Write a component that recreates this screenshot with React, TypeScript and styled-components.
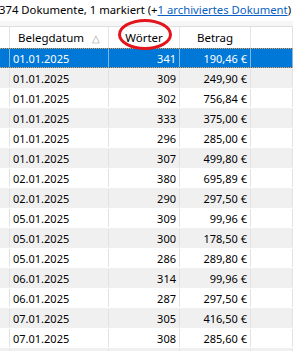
import React from 'react'
import styled, { createGlobalStyle } from 'styled-components'

const GlobalStyle = createGlobalStyle`
  html, body {
    margin: 0;
    padding: 0;
    background: #ffffff;
    overflow: hidden;
  }
  body {
    font-family: 'Noto Sans', 'Open Sans', sans-serif;
    font-size: 11px;
    color: #000000;
  }
`

const rows: [string, number, string][] = [
  ['01.01.2025', 341, '190,46 €'],
  ['01.01.2025', 309, '249,90 €'],
  ['01.01.2025', 302, '756,84 €'],
  ['01.01.2025', 333, '375,00 €'],
  ['01.01.2025', 296, '285,00 €'],
  ['01.01.2025', 307, '499,80 €'],
  ['02.01.2025', 380, '695,89 €'],
  ['02.01.2025', 290, '297,50 €'],
  ['05.01.2025', 309, '99,96 €'],
  ['05.01.2025', 300, '178,50 €'],
  ['05.01.2025', 286, '289,80 €'],
  ['06.01.2025', 314, '99,96 €'],
  ['06.01.2025', 287, '297,50 €'],
  ['07.01.2025', 305, '416,50 €'],
  ['07.01.2025', 308, '285,60 €'],
  ['07.01.2025', 301, '312,40 €'],
]

const App: React.FC = () => {
  return (
    <>
      <GlobalStyle />
      <Page>
        <StatusBar>
          374 Dokumente, 1 markiert (+<StatusLink>1 archiviertes Dokument</StatusLink>)
        </StatusBar>
        <Spacer />
        <Grid>
          <HeaderRow>
            <Cell />
            <HeaderCell>
              Belegdatum <SortMark>△</SortMark>
            </HeaderCell>
            <HeaderCell>Wörter</HeaderCell>
            <HeaderCell>Betrag</HeaderCell>
            <Cell />
            <Circle />
          </HeaderRow>
          {rows.map(([date, words, amount], index) => (
            <DataRow key={index} $selected={index === 0} $shaded={index % 2 === 1}>
              <Cell />
              <Cell>{date}</Cell>
              <Cell $right>{words}</Cell>
              <Cell $right>{amount}</Cell>
              <Cell />
            </DataRow>
          ))}
        </Grid>
      </Page>
    </>
  )
}

const Page = styled.div`
  width: 293px;
  height: 351px;
  display: flex;
  flex-direction: column;
  overflow: hidden;
`

const StatusBar = styled.div`
  flex-shrink: 0;
  height: 21px;
  line-height: 20px;
  white-space: nowrap;
  margin-left: -1px;
  font-size: 11.3px;
`

const StatusLink = styled.span`
  color: #0a5fc4;
  text-decoration: underline;
`

const Spacer = styled.div`
  flex-shrink: 0;
  height: 5px;
  background: #f6f6f6;
  border-bottom: 1px solid #dedede;
`

const Grid = styled.div`
  flex-shrink: 0;
  display: flex;
  flex-direction: column;
`

const columns = '10px 99px 71px 71px 1fr'

const HeaderRow = styled.div`
  position: relative;
  flex-shrink: 0;
  display: grid;
  grid-template-columns: ${columns};
  height: 21px;
  background: #ffffff;
`

const HeaderCell = styled.div`
  display: flex;
  align-items: center;
  justify-content: center;
  border-right: 1px solid #e5e5e5;
  white-space: nowrap;
  font-size: 11.5px;
`

const SortMark = styled.span`
  color: #a0a0a0;
  font-size: 10px;
  margin-left: 8px;
`

const Circle = styled.div`
  position: absolute;
  left: 118px;
  top: -8px;
  width: 54px;
  height: 31px;
  box-sizing: border-box;
  border: 3px solid #e3141c;
  border-radius: 50%;
  pointer-events: none;
`

const DataRow = styled.div<{ $selected?: boolean; $shaded?: boolean }>`
  flex-shrink: 0;
  display: grid;
  grid-template-columns: ${columns};
  height: 20px;
  box-sizing: border-box;
  background: ${({ $selected, $shaded }) => ($selected ? '#0078d7' : $shaded ? '#f0f0f0' : '#ffffff')};
  color: ${({ $selected }) => ($selected ? '#ffffff' : '#000000')};
  border-top: 1px dotted ${({ $selected }) => ($selected ? '#f0a040' : 'transparent')};
  border-bottom: 1px dotted ${({ $selected }) => ($selected ? '#f0a040' : 'transparent')};

  & > div {
    border-right-color: ${({ $selected }) => ($selected ? '#7fb6e8' : '#e2e2e2')};
  }
`

const Cell = styled.div<{ $right?: boolean }>`
  display: flex;
  align-items: center;
  justify-content: ${({ $right }) => ($right ? 'flex-end' : 'flex-start')};
  padding: 0 ${({ $right }) => ($right ? '3px' : '0')} 0 ${({ $right }) => ($right ? '0' : '3px')};
  border-right: 1px solid #e2e2e2;
  white-space: nowrap;
  overflow: hidden;
  font-size: 11px;
`

export default App
